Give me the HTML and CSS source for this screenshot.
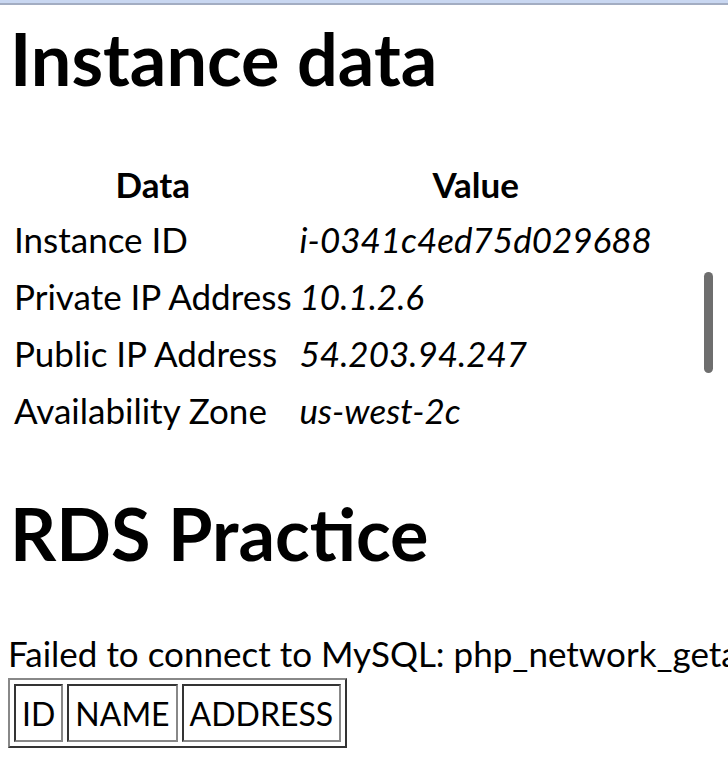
FILE: index.html
```html
<!DOCTYPE html>
<html>
<head>
<meta charset="utf-8">
<link rel="stylesheet" href="styles.css">
</head>
<body>
<div class="topbar"></div>
<main class="page">
  <h1 class="title">Instance data</h1>
  <table class="meta">
    <thead>
      <tr><th>Data</th><th>Value</th></tr>
    </thead>
    <tbody>
      <tr><td>Instance ID</td><td class="val">i-0341c4ed75d029688</td></tr>
      <tr><td>Private IP Address</td><td class="val">10.1.2.6</td></tr>
      <tr><td>Public IP Address</td><td class="val">54.203.94.247</td></tr>
      <tr><td>Availability Zone</td><td class="val">us-west-2c</td></tr>
    </tbody>
  </table>
  <h1 class="title rds">RDS Practice</h1>
  <p class="error">Failed to connect to MySQL: php_network_getaddresses: getaddrinfo failed: Name or service not known</p>
  <table class="rds-table">
    <tr><th>ID</th><th>NAME</th><th>ADDRESS</th></tr>
  </table>
</main>
<div class="scroll-thumb"></div>
</body>
</html>
```

FILE: styles.css
```css
html, body {
  margin: 0;
  padding: 0;
  background: #ffffff;
  overflow: hidden;
  width: 728px;
  height: 758px;
}
body {
  font-family: Lato, "Noto Sans", sans-serif;
  color: #000;
  position: relative;
}
.topbar {
  height: 3px;
  background: #c9d7f1;
  border-bottom: 2px solid #a3adc2;
}
.page {
  padding: 0 0 0 8px;
  white-space: nowrap;
  overflow: hidden;
}
.title {
  font-size: 72px;
  font-weight: 700;
  line-height: 80px;
  margin: 13px 0 0 2px;
}
.meta {
  margin-top: 60px;
  border-collapse: separate;
  border-spacing: 4px 0;
  font-size: 35px;
}
.meta th {
  font-weight: 700;
  height: 52px;
  text-align: center;
  vertical-align: middle;
  padding: 0 2px;
}
.meta td {
  height: 57px;
  padding: 0 2px;
  vertical-align: middle;
}
.meta .val {
  font-style: italic;
}
.title.rds {
  margin-top: 55px;
}
.error {
  font-size: 35px;
  margin: 58px 0 0 0;
  line-height: 44px;
}
.rds-table {
  border: 2px outset #888;
  border-spacing: 4px;
  font-size: 32px;
  margin-top: 3px;
}
.rds-table th {
  border: 2px inset #888;
  font-weight: 400;
  padding: 0 6px;
  height: 58px;
  box-sizing: border-box;
}
.scroll-thumb {
  position: absolute;
  left: 704px;
  top: 272px;
  width: 9px;
  height: 101px;
  border-radius: 5px;
  background: #6e6e6e;
}
```
